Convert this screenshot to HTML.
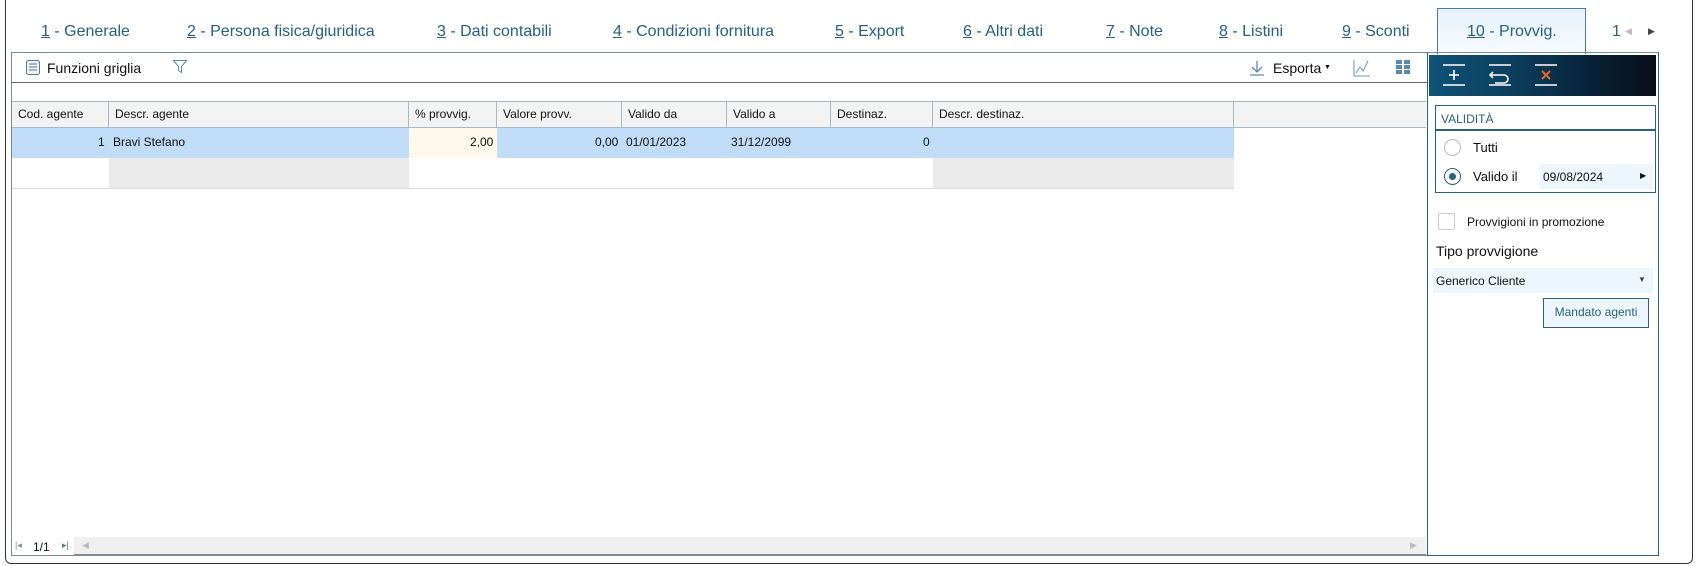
<!DOCTYPE html>
<html><head><meta charset="utf-8"><style>
*{box-sizing:border-box;margin:0;padding:0}
body{width:1697px;height:566px;background:#fff;position:relative;overflow:hidden;font-family:"Liberation Sans",sans-serif;color:#111}
.abs{position:absolute}
.tab{position:absolute;top:23px;font-size:16px;color:#2a5f87;white-space:nowrap}
.tab u{text-decoration:underline}
.g{font-size:12px;position:absolute;white-space:nowrap}
.hd{position:absolute;top:102px;height:25px;border-right:1px solid #a9b6c4;font-size:12px;padding:5px 6px;background:#f3f3f3}
</style></head><body>
<div class="abs" style="left:5px;top:-2px;width:1688px;height:566px;border:1.5px solid #333;border-radius:0 0 6px 6px"></div>
<div class="tab" style="left:41px"><u>1</u> - Generale</div>
<div class="tab" style="left:187px"><u>2</u> - Persona fisica/giuridica</div>
<div class="tab" style="left:437px"><u>3</u> - Dati contabili</div>
<div class="tab" style="left:613px"><u>4</u> - Condizioni fornitura</div>
<div class="tab" style="left:835px"><u>5</u> - Export</div>
<div class="tab" style="left:963px"><u>6</u> - Altri dati</div>
<div class="tab" style="left:1106px"><u>7</u> - Note</div>
<div class="tab" style="left:1219px"><u>8</u> - Listini</div>
<div class="tab" style="left:1342px"><u>9</u> - Sconti</div>
<div class="abs" style="left:1437px;top:8px;width:149px;height:46px;border:1px solid #4a7da0;border-bottom:none;background:linear-gradient(#e6f2fb,#f7fbfe)"></div>
<div class="tab" style="left:1467px"><u>10</u> - Provvig.</div>
<div class="tab" style="left:1612px">1</div>
<div class="abs" style="left:1625px;top:26px;font-size:9px;color:#bbb">◀</div>
<div class="abs" style="left:1648px;top:26px;font-size:9px;color:#444">▶</div>
<div class="abs" style="left:11px;top:52px;width:1417px;height:504px;border:1px solid #7e8c99;border-right:none"></div>
<div class="abs" style="left:11px;top:82px;width:1416px;height:1px;background:#666"></div>
<svg class="abs" style="left:25px;top:59px" width="16" height="17"><rect x="1.5" y="1.5" width="13" height="14" rx="2" fill="#eef3f8" stroke="#5a7a94"/><path d="M4 5h8M4 8h8M4 11h8" stroke="#5a7a94"/></svg>
<div class="abs" style="left:47px;top:60px;font-size:14px">Funzioni griglia</div>
<svg class="abs" style="left:172px;top:59px" width="16" height="16"><path d="M1.5 1.5h13l-5 6v6l-3-2v-4z" fill="none" stroke="#5a8ab0"/></svg>
<svg class="abs" style="left:1249px;top:60px" width="16" height="17"><path d="M8 1v11M3 7l5 5 5-5M1 15h14" fill="none" stroke="#5a8ab0" stroke-width="1.3"/></svg>
<div class="abs" style="left:1273px;top:60px;font-size:14px">Esporta</div>
<div class="abs" style="left:1324px;top:64px;font-size:7px">▼</div>
<svg class="abs" style="left:1353px;top:59px" width="18" height="18"><path d="M1 1v16h16M3 14l4-6 3 4 5-10" fill="none" stroke="#6a9ac0"/></svg>
<svg class="abs" style="left:1396px;top:60px" width="14" height="14"><g fill="#5a8ab0"><rect x="0" y="0" width="6" height="4"/><rect x="8" y="0" width="6" height="4"/><rect x="0" y="5" width="6" height="4"/><rect x="8" y="5" width="6" height="4"/><rect x="0" y="10" width="6" height="4"/><rect x="8" y="10" width="6" height="4"/></g></svg>
<div class="abs" style="left:12px;top:101px;width:1414px;height:27px;border-top:1px solid #a9b6c4;border-bottom:1px solid #a9b6c4;background:#f3f3f3"></div>
<div class="hd" style="left:12px;width:97px">Cod. agente</div>
<div class="hd" style="left:109px;width:300px">Descr. agente</div>
<div class="hd" style="left:409px;width:88px">% provvig.</div>
<div class="hd" style="left:497px;width:125px">Valore provv.</div>
<div class="hd" style="left:622px;width:105px">Valido da</div>
<div class="hd" style="left:727px;width:104px">Valido a</div>
<div class="hd" style="left:831px;width:102px">Destinaz.</div>
<div class="hd" style="left:933px;width:301px">Descr. destinaz.</div>
<div class="abs" style="left:12px;top:128px;width:1222px;height:30px;background:#c0dcf6"></div>
<div class="abs" style="left:409px;top:128px;width:88px;height:30px;background:#fdf8ec"></div>
<div class="abs" style="left:109px;top:158px;width:300px;height:30px;background:#ebebeb"></div>
<div class="abs" style="left:933px;top:158px;width:301px;height:30px;background:#ebebeb"></div>
<div class="abs" style="left:12px;top:188px;width:1222px;height:1px;background:#ddd"></div>
<div class="g" style="left:98px;top:135px">1</div>
<div class="g" style="left:113px;top:135px">Bravi Stefano</div>
<div class="g" style="left:470px;top:135px">2,00</div>
<div class="g" style="left:595px;top:135px">0,00</div>
<div class="g" style="left:626px;top:135px">01/01/2023</div>
<div class="g" style="left:731px;top:135px">31/12/2099</div>
<div class="g" style="left:923px;top:135px">0</div>
<div class="abs" style="left:12px;top:537px;width:1414px;height:18px;background:#f0f0f0;border-bottom:1px solid #7e8c99"></div>
<div class="abs" style="left:12px;top:537px;width:62px;height:18px;background:#fff"></div>
<div class="abs" style="left:15px;top:540px;font-size:9px;color:#888">|◂</div>
<div class="g" style="left:33px;top:540px">1/1</div>
<div class="abs" style="left:62px;top:540px;font-size:9px;color:#5a7a94">▸|</div>
<div class="abs" style="left:82px;top:540px;font-size:9px;color:#bbb">◀</div>
<div class="abs" style="left:1410px;top:540px;font-size:9px;color:#bbb">▶</div>
<div class="abs" style="left:1427px;top:52px;width:232px;height:504px;border:1.5px solid #2e5f7d;border-top:1px solid #7e8c99"></div>
<div class="abs" style="left:1429px;top:55px;width:227px;height:41px;background:linear-gradient(90deg,#0f5377 0%,#0b3c5a 40%,#071f33 75%,#0a0f1a 100%)"></div>
<svg class="abs" style="left:1441px;top:62px" width="130" height="26"><g stroke="#fff" stroke-width="1.6" fill="none"><path d="M2 3h22M2 23h22M13 8v10M8 13h10"/><path d="M48 3h22M48 23h22M52 10l-3 3 3 3M49 13h14a4 4 0 0 1 0 8h-9"/><path d="M94 3h22M94 23h22"/></g><path d="M101 9l8 8M109 9l-8 8" stroke="#e06a2a" stroke-width="2"/></svg>
<div class="abs" style="left:1435px;top:105px;width:221px;height:88px;border:1.5px solid #2e5f7d"></div>
<div class="abs" style="left:1435px;top:129px;width:221px;height:1.5px;background:#2e5f7d"></div>
<div class="abs" style="left:1441px;top:112px;font-size:12px;color:#2e5f7d">VALIDITÀ</div>
<div class="abs" style="left:1444px;top:139px;width:17px;height:17px;border:1.5px solid #bbb;border-radius:50%"></div>
<div class="abs" style="left:1473px;top:140px;font-size:13px">Tutti</div>
<div class="abs" style="left:1444px;top:168px;width:17px;height:17px;border:1.5px solid #2e5f7d;border-radius:50%"></div>
<div class="abs" style="left:1449px;top:173px;width:7px;height:7px;background:#2e5f7d;border-radius:50%"></div>
<div class="abs" style="left:1473px;top:169px;font-size:13px">Valido il</div>
<div class="abs" style="left:1540px;top:164px;width:113px;height:25px;background:#eef6fd"></div>
<div class="abs" style="left:1543px;top:170px;font-size:12px">09/08/2024</div>
<div class="abs" style="left:1640px;top:171px;font-size:8px">▶</div>
<div class="abs" style="left:1438px;top:213px;width:17px;height:17px;border:1.5px solid #ccc;border-radius:2px"></div>
<div class="abs" style="left:1467px;top:215px;font-size:12px">Provvigioni in promozione</div>
<div class="abs" style="left:1436px;top:243px;font-size:14px">Tipo provvigione</div>
<div class="abs" style="left:1433px;top:268px;width:220px;height:25px;background:#eef6fd"></div>
<div class="abs" style="left:1436px;top:274px;font-size:12px">Generico Cliente</div>
<div class="abs" style="left:1638px;top:275px;font-size:8px;color:#444">▼</div>
<div class="abs" style="left:1543px;top:298px;width:106px;height:30px;border:1.5px solid #2e5f7d;background:#eef6fd;font-size:12px;color:#2e5f7d;text-align:center;line-height:27px">Mandato agenti</div>
</body></html>
